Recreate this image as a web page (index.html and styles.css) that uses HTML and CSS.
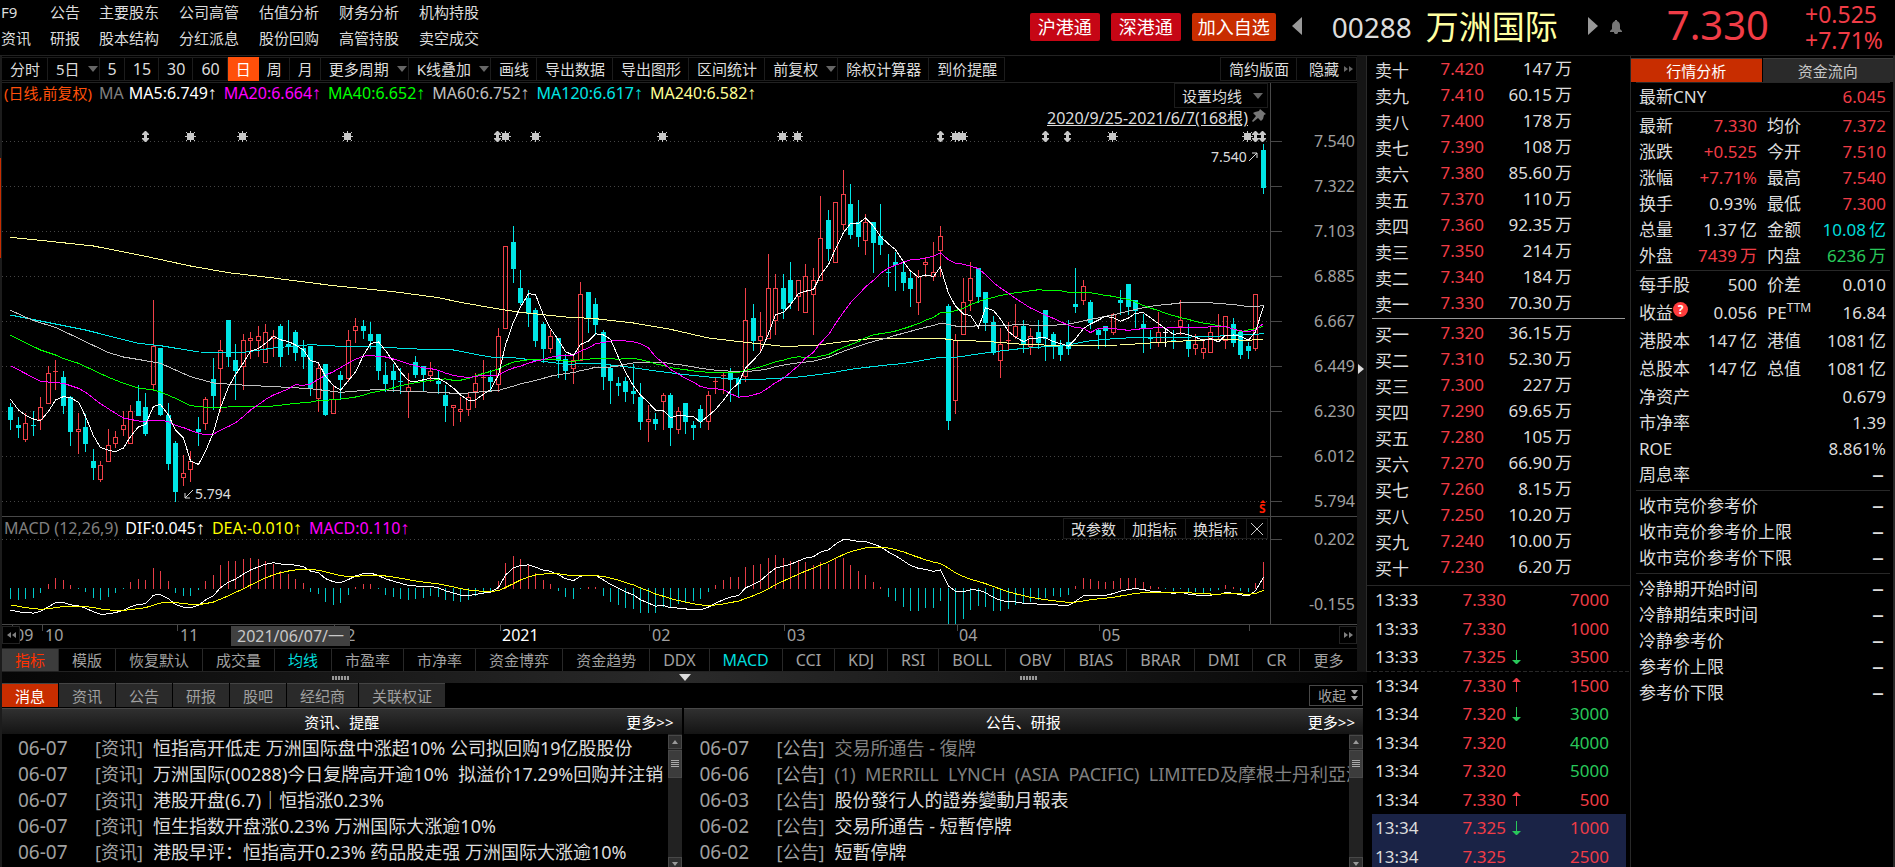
FILE: index.html
```html
<!DOCTYPE html>
<html lang="zh-CN">
<head>
    <meta charset="UTF-8">
    <meta name="viewport" content="width=device-width, initial-scale=1.0">
    <title>00288 万洲国际</title>
    <link rel="stylesheet" href="styles.css">
</head>
<body>
    <svg class="defs" aria-hidden="true">
        <symbol id="tri" viewBox="0 0 10 6"><path d="M0 0h10l-5 6z"/></symbol>
        <symbol id="up" viewBox="0 0 9 14"><path d="M4 14V4H0l4-4h1l4 4H5v10z"/></symbol>
        <symbol id="down" viewBox="0 0 9 14"><path d="M4 0v10H0l4 4h1l4-4H5V0z"/></symbol>
        <symbol id="fwd" viewBox="0 0 9 6"><path d="M0 0l4 3-4 3zM5 0l4 3-4 3z"/></symbol>
        <symbol id="back" viewBox="0 0 9 6"><path d="M4 0L0 3l4 3zM9 0L5 3l4 3z"/></symbol>
    </svg>

    <header class="top">
        <nav class="menu">
            <a href="#">F9</a><a href="#">公告</a><a href="#">主要股东</a><a href="#">公司高管</a><a href="#">估值分析</a><a href="#">财务分析</a><a href="#">机构持股</a>
            <a href="#">资讯</a><a href="#">研报</a><a href="#">股本结构</a><a href="#">分红派息</a><a href="#">股份回购</a><a href="#">高管持股</a><a href="#">卖空成交</a>
        </nav>
        <div class="badges">
            <button>沪港通</button>
            <button>深港通</button>
            <button class="add">加入自选</button>
        </div>
        <button class="step" aria-label="上一只"><svg width="10" height="18" viewBox="0 0 10 18"><path d="M10 0v18L0 9z"/></svg></button>
        <h1><span class="code">00288</span><span class="name">万洲国际</span></h1>
        <button class="step" aria-label="下一只"><svg width="10" height="18" viewBox="0 0 10 18"><path d="M0 0v18l10-9z"/></svg></button>
        <button class="bell" aria-label="提醒"><svg width="12" height="14" viewBox="0 0 12 14"><path d="M5 0h2v1c2 1 3 2 3 5v3l2 2v1H0v-1l2-2V6c0-3 1-4 3-5zM4 12h4v1l-1 1H5l-1-1z"/></svg></button>
        <div class="price">7.330</div>
        <div class="change"><span>+0.525</span><span>+7.71%</span></div>
    </header>

    <main class="desk">
        <section class="left">
            <div class="upper">
                <div class="chart-col">
                    <div class="toolbar">
                        <button>分时</button>
                        <button class="drop">5日<svg width="10" height="6"><use href="#tri"/></svg></button>
                        <button class="num">5</button>
                        <button class="num">15</button>
                        <button class="num">30</button>
                        <button class="num">60</button>
                        <button class="on">日</button>
                        <button>周</button>
                        <button>月</button>
                        <button class="drop">更多周期<svg width="10" height="6"><use href="#tri"/></svg></button>
                        <button class="drop">K线叠加<svg width="10" height="6"><use href="#tri"/></svg></button>
                        <button>画线</button>
                        <button>导出数据</button>
                        <button>导出图形</button>
                        <button>区间统计</button>
                        <button class="drop">前复权<svg width="10" height="6"><use href="#tri"/></svg></button>
                        <button>除权计算器</button>
                        <button>到价提醒</button>
                        <button class="simple">简约版面</button>
                        <button class="hide">隐藏<svg width="9" height="6"><use href="#fwd"/></svg></button>
                    </div>

                    <div class="panel">
                        <div class="plot">
                            <svg id="kline" viewBox="2 83 1268 433"></svg>
                            <div class="legend">
                                <span class="orange">(日线,前复权)</span>
                                <span class="dim">MA</span>
                                <span class="w">MA5:6.749<i>↑</i></span>
                                <span class="m">MA20:6.664<i>↑</i></span>
                                <span class="g">MA40:6.652<i>↑</i></span>
                                <span class="s">MA60:6.752<i>↑</i></span>
                                <span class="c">MA120:6.617<i>↑</i></span>
                                <span class="y">MA240:6.582<i>↑</i></span>
                            </div>
                            <button class="set-ma">设置均线<svg width="10" height="6"><use href="#tri"/></svg></button>
                            <div class="range">
                                <a href="#">2020/9/25-2021/6/7(168根)</a>
                                <svg width="14" height="14" viewBox="0 0 14 14"><path d="M8 0l6 5-2 1-1 4-2 2-3-3-5 4-1-1 4-5-3-3 2-1 4-1z"/></svg>
                            </div>
                        </div>
                        <div class="axis"><span>7.540</span><span>7.322</span><span>7.103</span><span>6.885</span><span>6.667</span><span>6.449</span><span>6.230</span><span>6.012</span><span>5.794</span></div>
                    </div>

                    <div class="panel">
                        <div class="plot">
                            <svg id="macd" viewBox="2 517 1268 107"></svg>
                            <div class="legend low">
                                <span class="dim">MACD (12,26,9)</span>
                                <span class="w">DIF:0.045<i>↑</i></span>
                                <span class="dea">DEA:-0.010<i>↑</i></span>
                                <span class="m">MACD:0.110<i>↑</i></span>
                            </div>
                            <div class="macd-tools">
                                <button>改参数</button><button>加指标</button><button>换指标</button><button class="close" aria-label="关闭"><svg width="12" height="12" viewBox="0 0 12 12"><path d="M0 0l12 12M12 0L0 12"/></svg></button>
                            </div>
                        </div>
                        <div class="axis macd-axis"><span>0.202</span><span>-0.155</span></div>
                    </div>

                    <div class="time">
                        <svg id="dates" viewBox="2 625 1355 23"></svg>
                        <button class="prev" aria-label="向前"><svg width="9" height="6"><use href="#back"/></svg></button>
                        <span class="cursor-date">2021/06/07/一</span>
                        <button class="next" aria-label="向后"><svg width="9" height="6"><use href="#fwd"/></svg></button>
                    </div>

                    <div class="indicators">
                        <button class="on">指标</button><button>模版</button><button>恢复默认</button><button>成交量</button><button class="pick">均线</button><button>市盈率</button><button>市净率</button><button>资金博弈</button><button>资金趋势</button><button class="en">DDX</button><button class="en pick">MACD</button><button class="en">CCI</button><button class="en">KDJ</button><button class="en">RSI</button><button class="en">BOLL</button><button class="en">OBV</button><button class="en">BIAS</button><button class="en">BRAR</button><button class="en">DMI</button><button class="en">CR</button><button>更多</button>
                    </div>
                </div>
                <div class="strip"><svg width="6" height="10" viewBox="0 0 6 10"><path d="M0 0l6 5-6 5z"/></svg></div>
            </div>

            <div class="splitter">
                <i class="grip"></i>
                <svg width="12" height="7" viewBox="0 0 12 7"><path d="M0 0h12L6 7z"/></svg>
                <i class="grip"></i>
            </div>

            <div class="news-tabs">
                <button class="on">消息</button><button>资讯</button><button>公告</button><button>研报</button><button>股吧</button><button>经纪商</button><button>关联权证</button>
                <button class="fold">收起<svg width="7" height="11" viewBox="0 0 7 11"><path d="M0 0h7L4 4H3zM0 6h7l-3 4H3z"/></svg></button>
            </div>

            <div class="news">
                <section>
                    <h2>资讯、提醒<a href="#">更多&gt;&gt;</a></h2>
                    <div class="feed">
                        <ul>
                            <li><time>06-07</time><em>[资讯]</em><a href="#">恒指高开低走 万洲国际盘中涨超10% 公司拟回购19亿股股份</a></li>
                            <li><time>06-07</time><em>[资讯]</em><a href="#">万洲国际(00288)今日复牌高开逾10%  拟溢价17.29%回购并注销</a></li>
                            <li><time>06-07</time><em>[资讯]</em><a href="#">港股开盘(6.7)｜恒指涨0.23%</a></li>
                            <li><time>06-07</time><em>[资讯]</em><a href="#">恒生指数开盘涨0.23% 万洲国际大涨逾10%</a></li>
                            <li><time>06-07</time><em>[资讯]</em><a href="#">港股早评：恒指高开0.23% 药品股走强 万洲国际大涨逾10%</a></li>
                        </ul>
                        <div class="scroll"><b class="btn-up"></b><b class="thumb"></b><b class="btn-down"></b></div>
                    </div>
                </section>
                <section>
                    <h2>公告、研报<a href="#">更多&gt;&gt;</a></h2>
                    <div class="feed">
                        <ul>
                            <li><time>06-07</time><em>[公告]</em><a href="#" class="read">交易所通告 - 復牌</a></li>
                            <li><time>06-06</time><em>[公告]</em><a href="#" class="read">(1)  MERRILL  LYNCH  (ASIA  PACIFIC)  LIMITED及摩根士丹利亞洲</a></li>
                            <li><time>06-03</time><em>[公告]</em><a href="#">股份發行人的證券變動月報表</a></li>
                            <li><time>06-02</time><em>[公告]</em><a href="#">交易所通告 - 短暫停牌</a></li>
                            <li><time>06-02</time><em>[公告]</em><a href="#">短暫停牌</a></li>
                        </ul>
                        <div class="scroll"><b class="btn-up"></b><b class="thumb"></b><b class="btn-down"></b></div>
                    </div>
                </section>
            </div>
        </section>

        <!-- 买卖盘口 -->
        <section class="book">
            <table class="depth">
                <tbody>
                    <tr><th>卖十</th><td>7.420</td><td>147<i>万</i></td></tr>
                    <tr><th>卖九</th><td>7.410</td><td>60.15<i>万</i></td></tr>
                    <tr><th>卖八</th><td>7.400</td><td>178<i>万</i></td></tr>
                    <tr><th>卖七</th><td>7.390</td><td>108<i>万</i></td></tr>
                    <tr><th>卖六</th><td>7.380</td><td>85.60<i>万</i></td></tr>
                    <tr><th>卖五</th><td>7.370</td><td>110<i>万</i></td></tr>
                    <tr><th>卖四</th><td>7.360</td><td>92.35<i>万</i></td></tr>
                    <tr><th>卖三</th><td>7.350</td><td>214<i>万</i></td></tr>
                    <tr><th>卖二</th><td>7.340</td><td>184<i>万</i></td></tr>
                    <tr><th>卖一</th><td>7.330</td><td>70.30<i>万</i></td></tr>
                </tbody>
            </table>
            <hr>
            <table class="depth">
                <tbody>
                    <tr><th>买一</th><td>7.320</td><td>36.15<i>万</i></td></tr>
                    <tr><th>买二</th><td>7.310</td><td>52.30<i>万</i></td></tr>
                    <tr><th>买三</th><td>7.300</td><td>227<i>万</i></td></tr>
                    <tr><th>买四</th><td>7.290</td><td>69.65<i>万</i></td></tr>
                    <tr><th>买五</th><td>7.280</td><td>105<i>万</i></td></tr>
                    <tr><th>买六</th><td>7.270</td><td>66.90<i>万</i></td></tr>
                    <tr><th>买七</th><td>7.260</td><td>8.15<i>万</i></td></tr>
                    <tr><th>买八</th><td>7.250</td><td>10.20<i>万</i></td></tr>
                    <tr><th>买九</th><td>7.240</td><td>10.00<i>万</i></td></tr>
                    <tr><th>买十</th><td>7.230</td><td>6.20<i>万</i></td></tr>
                </tbody>
            </table>
            <table class="ticks">
                <tbody>
                    <tr><td>13:33</td><td>7.330</td><td></td><td>7000</td></tr>
                    <tr><td>13:33</td><td>7.330</td><td></td><td>1000</td></tr>
                    <tr><td>13:33</td><td>7.325</td><td><svg class="dn" width="9" height="14"><use href="#down"/></svg></td><td>3500</td></tr>
                    <tr class="minute"><td>13:34</td><td>7.330</td><td><svg width="9" height="14"><use href="#up"/></svg></td><td>1500</td></tr>
                    <tr><td>13:34</td><td>7.320</td><td><svg class="dn" width="9" height="14"><use href="#down"/></svg></td><td class="sell">3000</td></tr>
                    <tr><td>13:34</td><td>7.320</td><td></td><td class="sell">4000</td></tr>
                    <tr><td>13:34</td><td>7.320</td><td></td><td class="sell">5000</td></tr>
                    <tr><td>13:34</td><td>7.330</td><td><svg width="9" height="14"><use href="#up"/></svg></td><td>500</td></tr>
                    <tr class="hot"><td>13:34</td><td>7.325</td><td><svg class="dn" width="9" height="14"><use href="#down"/></svg></td><td>1000</td></tr>
                    <tr class="hot"><td>13:34</td><td>7.325</td><td></td><td>2500</td></tr>
                </tbody>
            </table>
        </section>

        <!-- 行情分析 -->
        <section class="quote">
            <div class="quote-tabs"><button class="on">行情分析</button><button>资金流向</button></div>
            <table class="tall one">
                <tbody><tr><th>最新CNY</th><td class="red">6.045</td></tr></tbody>
            </table>
            <table class="two">
                <tbody>
                    <tr><th>最新</th><td class="red">7.330</td><th>均价</th><td class="red">7.372</td></tr>
                    <tr><th>涨跌</th><td class="red">+0.525</td><th>今开</th><td class="red">7.510</td></tr>
                    <tr><th>涨幅</th><td class="red">+7.71%</td><th>最高</th><td class="red">7.540</td></tr>
                    <tr><th>换手</th><td>0.93%</td><th>最低</th><td class="red">7.300</td></tr>
                    <tr><th>总量</th><td>1.37<i>亿</i></td><th>金额</th><td class="cyan">10.08<i>亿</i></td></tr>
                    <tr><th>外盘</th><td class="red">7439<i>万</i></td><th>内盘</th><td class="green">6236<i>万</i></td></tr>
                </tbody>
            </table>
            <table class="tall two shares">
                <tbody>
                    <tr><th>每手股</th><td>500</td><th>价差</th><td>0.010</td></tr>
                    <tr><th>收益<b class="help">?</b></th><td>0.056</td><th>PE<sup>TTM</sup></th><td>16.84</td></tr>
                    <tr><th>港股本</th><td>147<i>亿</i></td><th>港值</th><td>1081<i>亿</i></td></tr>
                    <tr><th>总股本</th><td>147<i>亿</i></td><th>总值</th><td>1081<i>亿</i></td></tr>
                </tbody>
            </table>
            <table class="one ratios">
                <tbody>
                    <tr><th>净资产</th><td>0.679</td></tr>
                    <tr><th>市净率</th><td>1.39</td></tr>
                    <tr><th>ROE</th><td>8.861%</td></tr>
                    <tr><th>周息率</th><td class="none">–</td></tr>
                </tbody>
            </table>
            <table class="one">
                <tbody>
                    <tr><th>收市竞价参考价</th><td class="none">–</td></tr>
                    <tr><th>收市竞价参考价上限</th><td class="none">–</td></tr>
                    <tr><th>收市竞价参考价下限</th><td class="none">–</td></tr>
                </tbody>
            </table>
            <table class="one">
                <tbody>
                    <tr><th>冷静期开始时间</th><td class="none">–</td></tr>
                    <tr><th>冷静期结束时间</th><td class="none">–</td></tr>
                    <tr><th>冷静参考价</th><td class="none">–</td></tr>
                    <tr><th>参考价上限</th><td class="none">–</td></tr>
                    <tr><th>参考价下限</th><td class="none">–</td></tr>
                </tbody>
            </table>
        </section>
    </main>

    <script src="chart.js"></script>
</body>
</html>
```
FILE: styles.css
```css
* {
    box-sizing: border-box;
}

body {
    margin: 0;
    height: 100vh;
    overflow: hidden;
    background: #000;
    color: #dcdcdc;
    font-family: "Noto Sans", "Noto Sans CJK SC", sans-serif;
    font-size: 15px;
}

button {
    font: inherit;
    color: inherit;
    background: none;
    border: 0;
    padding: 0;
    margin: 0;
    white-space: nowrap;
    cursor: pointer;
}

a {
    color: inherit;
    text-decoration: none;
}

svg {
    fill: currentColor;
}

table {
    border-collapse: collapse;
    table-layout: fixed;
}

th,
td {
    padding: 0;
    font-weight: normal;
    white-space: nowrap;
}

th {
    text-align: left;
}

td i {
    margin-left: 3px;
    font-style: normal;
}

.defs {
    display: none;
}

/* 顶部 */
.top {
    display: flex;
    align-items: center;
    height: 56px;
    border-bottom: 1px solid #222;
}

.menu {
    display: grid;
    grid-template-columns: 49px 49px 80px 80px 80px 80px 80px;
    align-self: flex-start;
    margin: -1px auto 0 1px;
    line-height: 26px;
    white-space: nowrap;
}

.badges {
    display: flex;
    gap: 11px;
    margin-bottom: 2px;
}

.badges button {
    height: 28px;
    padding: 0 8px;
    border-radius: 2px;
    background: #c60615;
    color: #fff;
    font-size: 18px;
    line-height: 26px;
}

.badges .add {
    padding: 0 6px;
    background: #c82d00;
}

.step {
    display: flex;
    margin: 0 0 4px 16px;
    color: #999;
}

.top h1 {
    display: flex;
    align-items: center;
    gap: 14px;
    margin: 0 14px 2px 30px;
    font-weight: normal;
    line-height: 48px;
}

.code {
    font-size: 28px;
}

.name {
    color: #ffffa0;
    font-size: 33px;
}

.bell {
    display: flex;
    margin: 0 0 2px 12px;
    color: #777;
}

.price {
    margin: 0 36px 6px 45px;
    color: #f03c46;
    font-size: 40px;
    line-height: 50px;
}

.change {
    display: flex;
    flex-direction: column;
    width: 90px;
    margin-bottom: 2px;
    color: #f03c46;
    font-size: 23px;
    line-height: 26px;
}

/* 主体 */
.desk {
    display: grid;
    grid-template-columns: minmax(0, 1fr) 264px 264px;
    height: calc(100vh - 56px);
}

.left {
    display: flex;
    flex-direction: column;
    min-width: 0;
    border-left: 2px solid #1c1c1c;
    position: relative;
}

.left::before {
    content: "";
    position: absolute;
    left: -2px;
    top: 102px;
    width: 1px;
    height: 100px;
    background: #c82d00;
}

.upper {
    display: flex;
}

.chart-col {
    flex: 1;
    min-width: 0;
}

.toolbar {
    display: flex;
    height: 27px;
    padding: 1px 0;
    border-bottom: 1px solid #222;
}

.toolbar button {
    padding: 0 7px 0 8px;
    border: 1px solid #1c1c1c;
    border-left: 0;
    line-height: 20px;
}

.toolbar .num {
    font-size: 16px;
}

.toolbar .drop {
    display: flex;
    align-items: center;
    gap: 8px;
    padding-right: 1px;
    padding-bottom: 1px;
}

.drop svg,
.set-ma svg {
    color: #666;
}

.toolbar .on {
    border-color: #ff500a;
    background: #ff500a;
    color: #fff;
}

.toolbar .simple {
    margin-left: auto;
    border-left: 1px solid #1c1c1c;
}

.toolbar .hide {
    display: flex;
    align-items: center;
    gap: 5px;
    padding: 0 3px 0 12px;
}

.hide svg {
    color: #666;
}

.panel {
    display: flex;
    align-items: flex-start;
    border-bottom: 1px solid #484848;
}

.plot {
    position: relative;
    flex: 1;
    min-width: 0;
    border-right: 1px solid #484848;
}

.plot > svg,
.time > svg {
    display: block;
    width: 100%;
    font-size: 14px;
}

.axis {
    width: 86px;
    padding-top: 36px;
    margin-bottom: -10px;
    color: #a0a0a0;
    font-size: 16px;
    line-height: 45px;
}

.axis span {
    display: flex;
    align-items: center;
    justify-content: space-between;
    padding-right: 2px;
}

.axis span::before {
    content: "";
    width: 11px;
    height: 1px;
    background: #484848;
}

.macd-axis {
    padding-top: 0;
}

.macd-axis span {
    margin-bottom: 20px;
}

.macd-axis span:last-child {
    margin: 0;
}

.macd-axis span:last-child::before {
    background: none;
}

.legend {
    position: absolute;
    left: 2px;
    top: 0;
    display: flex;
    gap: 7px;
    font-size: 16px;
    line-height: 20px;
    white-space: nowrap;
}

.legend.low {
    line-height: 22px;
}

.legend i {
    font-family: "Liberation Sans", sans-serif;
    font-size: 18px;
    font-style: normal;
    line-height: 1;
}

.orange { color: #ff500a; font-size: 15px; }
.dim { color: #808080; }
.w { color: #fff; }
.m { color: #ff00ff; }
.g { color: #00ff00; }
.s { color: #c0c0c0; }
.c { color: #00e6e6; }
.y { color: #ffff96; }
.dea { color: #ffff00; }

.legend .dim {
    margin-right: -2px;
}

.low .dim {
    margin-right: 0;
}

.set-ma {
    position: absolute;
    right: 2px;
    top: 0;
    display: flex;
    align-items: center;
    gap: 11px;
    height: 25px;
    padding: 0 4px 0 7px;
    border: 1px solid #1c1c1c;
}

.range {
    position: absolute;
    right: 4px;
    top: 26px;
    display: flex;
    gap: 4px;
    font-size: 16px;
    line-height: 18px;
}

.range a {
    text-decoration: underline;
}

.range svg {
    color: #777;
}

.macd-tools {
    position: absolute;
    right: 2px;
    top: 1px;
    display: flex;
    height: 21px;
    border: 1px solid #1c1c1c;
}

.macd-tools button {
    padding: 0 8px 0 7px;
    border-right: 1px solid #1c1c1c;
    line-height: 18px;
}

.macd-tools .close {
    padding: 0 4px;
    border: 0;
}

.close svg {
    display: block;
    stroke: #ccc;
}

.time {
    position: relative;
    color: #a0a0a0;
}

.time > svg {
    font-size: 16px;
}

.time button {
    position: absolute;
    top: 1px;
    display: flex;
    align-items: center;
    justify-content: center;
    width: 18px;
    height: 18px;
    border: 1px solid #222;
    background: #000;
    color: #808080;
}

.time .prev { left: 0; }
.time .next { right: 0; }

.cursor-date {
    position: absolute;
    left: 229px;
    top: 1px;
    padding: 0 6px;
    background: #404040;
    color: #c8c8c8;
    font-size: 16px;
    line-height: 20px;
}

.indicators {
    display: flex;
    height: 24px;
    border-top: 1px solid #222;
    border-bottom: 1px solid #222;
    color: #a0a0a0;
}

.indicators button {
    padding: 0 13px;
    border-right: 1px solid #282828;
    line-height: 22px;
}

.indicators .on {
    background: #3c3c3c;
    color: #ff3200;
}

.indicators .pick { color: #00dcdc; }
.indicators .en { font-size: 16px; }

.strip {
    display: flex;
    align-items: center;
    width: 10px;
    padding: 9px 0 0 1px;
    border-right: 1px solid #2a2a2a;
    background: #151515;
}

.splitter {
    display: flex;
    align-items: center;
    justify-content: space-evenly;
    height: 11px;
    background: linear-gradient(90deg, #060606, #2a2a2a 50%, #060606);
}

.grip {
    width: 17px;
    height: 4px;
    background: repeating-linear-gradient(90deg, #999 0 2px, #222 2px 3px);
}

.news-tabs {
    display: flex;
    gap: 1px;
    height: 25px;
    padding-right: 4px;
    color: #a0a0a0;
}

.news-tabs button {
    height: 24px;
    padding: 0 13px;
    background: #2a2a2a;
    border-top: 1px solid #444;
    line-height: 22px;
}

.news-tabs .on {
    background: #c82d00;
    color: #fff;
}

.news-tabs .fold {
    display: flex;
    align-items: center;
    gap: 5px;
    height: 21px;
    margin: 2px 0 0 auto;
    padding: 0 4px 0 8px;
    border: 1px solid #484848;
    background: #000;
    line-height: 18px;
    font-size: 14px;
}

.news {
    display: grid;
    grid-template-columns: minmax(0, 1fr) minmax(0, 1fr);
    gap: 2px;
    flex: 1;
    min-height: 0;
    padding-right: 4px;
}

.news section {
    display: flex;
    flex-direction: column;
    min-height: 0;
}

.news h2 {
    position: relative;
    flex: none;
    margin: 0;
    height: 26px;
    border-top: 1px solid #484848;
    background: linear-gradient(#303030, #141414);
    color: #fff;
    font-size: 15px;
    font-weight: normal;
    line-height: 26px;
    text-align: center;
}

.news h2 a {
    position: absolute;
    right: 8px;
    top: 0;
}

.feed {
    display: flex;
    flex: 1;
    min-height: 0;
}

.feed ul {
    flex: 1;
    min-width: 0;
    margin: 0;
    padding: 1px 0 0 16px;
    overflow: hidden;
    list-style: none;
    font-size: 18px;
    line-height: 26px;
}

.feed li {
    display: flex;
    height: 26px;
    white-space: pre;
}

.feed time {
    flex: none;
    width: 77px;
    color: #a0a0a0;
    font-size: 19px;
}

.feed em {
    flex: none;
    width: 58px;
    color: #a0a0a0;
    font-style: normal;
}

.feed .read {
    color: #808080;
}

.scroll {
    display: flex;
    flex-direction: column;
    gap: 1px;
    width: 14px;
    padding-top: 1px;
    background: #222;
}

.scroll b {
    display: flex;
    align-items: center;
    justify-content: center;
    height: 14px;
    border: 1px solid #484848;
    background: #303030;
}

.scroll .thumb {
    height: 28px;
    margin-bottom: auto;
    background: #3c3c3c;
}

.thumb::after {
    content: "";
    width: 8px;
    height: 8px;
    background: repeating-linear-gradient(#aaa 0 1px, #3c3c3c 1px 2px);
}

.btn-up::after,
.btn-down::after {
    content: "";
    border: 3px solid transparent;
    border-top: 0;
    border-bottom: 4px solid #999;
}

.btn-down::after {
    border-bottom: 0;
    border-top: 4px solid #999;
}

/* 盘口 */
.book,
.quote {
    font-size: 17px;
    border-right: 1px solid #282828;
}

.depth {
    width: 197px;
    margin-left: 8px;
}

.depth tr {
    height: 26px;
}

.depth td {
    width: 88px;
    text-align: right;
    line-height: 24px;
}

.depth td:nth-child(2) {
    color: #f03c46;
}

.book hr {
    height: 1px;
    margin: 2px 5px 1px;
    border: 0;
    background: #999;
}

.ticks {
    width: 100%;
    border-top: 1px solid #282828;
    margin-top: 5px;
    color: #f03c46;
}

.ticks tr {
    height: 28px;
}

.ticks tr:nth-child(even) {
    height: 29px;
}

.ticks td:nth-child(1) {
    width: 58px;
    padding-left: 8px;
    color: #dcdcdc;
}

.ticks td:nth-child(2) {
    width: 81px;
    text-align: right;
}

.ticks td:nth-child(3) {
    padding-left: 6px;
}

.ticks svg {
    display: block;
}

.ticks td:nth-child(4) {
    width: 80px;
    padding-right: 21px;
    text-align: right;
}

.ticks .dn,
.ticks .sell,
.green {
    color: #28c85a;
}

.ticks .minute {
    background: repeating-linear-gradient(90deg, #282828 0 4px, transparent 4px 6px) 0 0 / 100% 1px no-repeat;
}

.ticks .hot {
    background: linear-gradient(#1a2346, #1a2346) 5px 0 / 254px 100% no-repeat;
}

.red { color: #f03c46; }
.cyan { color: #00dcdc; }

/* 行情 */
.quote {
    border-right: 2px solid #282828;
}

.quote-tabs {
    display: flex;
    gap: 1px;
    padding-top: 2px;
    font-size: 15px;
}

.quote-tabs button {
    flex: 1;
    height: 24px;
    background: #2a2a2a;
    border-top: 1px solid #3c3c3c;
    color: #c8c8c8;
    line-height: 22px;
}

.quote-tabs .on {
    background: #c82d00;
    color: #fff;
}

.quote table {
    width: 254px;
    margin-left: 5px;
    border-top: 1px solid #282828;
    border-collapse: separate;
    border-spacing: 0;
    padding: 2px 4px 2px 3px;
}

.quote tr {
    height: 26px;
}

.quote th,
.quote td {
    line-height: 24px;
}

.quote td {
    text-align: right;
}

.quote .two th,
.quote .two td {
    padding-bottom: 2px;
}

.quote .tall tr { height: 28px; }
.quote .tall { padding-top: 0; padding-bottom: 0; }
.quote .two { padding-bottom: 0; }
.quote .shares { padding-top: 1px; }
.quote .ratios { border-top: 0; padding-top: 0; }
.two th:first-child { width: 54px; }
.two td { width: 64px; }
.two th:nth-child(3) { padding-left: 10px; }
.one th { width: 165px; }

.quote .none {
    padding-right: 2px;
    font-size: 24px;
    line-height: 20px;
    padding-bottom: 4px;
}

.help {
    display: inline-block;
    width: 15px;
    height: 15px;
    border-radius: 8px;
    background: #ff3c3c;
    color: #fff;
    font-size: 12px;
    line-height: 15px;
    text-align: center;
    vertical-align: 5px;
}

.quote sup {
    font-size: 12px;
    line-height: 1px;
}
```
FILE: chart.js
```js
// 每根K线: 颜色 最高 实体上沿 实体下沿 最低 (1/3像素, r涨 c跌 w平)
const raw = `c 850 861 900 930,c 892 915 924 954,r 880 909 960 966,c 873 915 918 948,r 831 861 900 930,r 738 759 852 852,r 720 753 756 810,c 753 771 858 882,
c 828 831 936 978,r 879 927 936 1002,c 883 921 972 996,c 987 1023 1044 1080,r 1023 1035 1080 1086,r 927 975 1026 1026,r 933 951 972 984,r 873 915 930 948,
r 855 873 972 972,c 795 843 888 888,c 819 861 942 948,r 540 678 795 810,c 684 684 885 888,c 849 885 1032 1050,c 963 969 1116 1146,r 1005 1059 1074 1098,
r 993 1023 1050 1086,c 891 927 936 978,r 831 837 912 930,c 714 777 828 870,r 660 690 747 876,c 600 600 711 741,c 672 720 753 840,r 642 660 741 810,
r 636 654 663 717,r 618 648 663 711,r 612 636 729 729,r 630 648 657 711,c 612 618 711 741,c 600 672 681 705,c 630 636 699 723,c 660 684 711 747,
c 678 678 807 828,r 726 744 837 876,c 732 732 885 888,r 798 837 882 882,c 753 765 780 840,r 630 660 777 786,r 594 618 633 669,c 600 618 633 657,
c 606 642 663 687,c 642 642 753 780,c 726 765 792 816,c 732 753 780 816,c 744 783 786 822,r 759 801 816 894,c 708 726 765 774,c 738 738 765 816,
r 726 753 768 786,c 753 783 792 822,c 795 825 858 906,r 855 855 864 918,r 831 867 876 906,r 816 831 870 888,r 759 789 816 864,r 720 771 774 840,
c 750 771 786 813,r 624 648 795 816,r 378 378 627 627,c 318 366 447 489,c 450 504 549 555,c 510 534 582 621,c 564 570 663 681,c 606 612 687 729,
r 630 648 687 699,c 654 654 723 774,c 702 717 753 780,r 702 720 747 792,r 486 522 723 723,c 516 516 597 639,c 534 552 615 645,c 630 636 771 810,
c 738 744 783 852,c 771 789 798 828,c 771 783 816 846,c 732 813 822 852,c 789 831 906 930,r 855 897 906 966,c 879 897 912 930,r 819 825 846 930,
c 819 825 924 978,r 861 873 930 942,c 849 849 906 942,c 903 915 924 960,c 855 867 906 924,r 813 825 906 930,r 774 783 786 822,r 759 765 768 822,
c 744 753 780 846,c 771 777 792 834,r 504 600 771 786,c 552 594 663 693,r 576 648 663 693,r 402 504 657 657,r 462 504 603 645,c 462 504 567 597,
c 426 480 549 567,r 480 480 531 573,r 432 468 579 579,r 444 480 525 645,r 228 354 483 483,c 270 300 387 423,r 246 246 429 429,r 150 222 315 330,
c 192 252 345 357,c 240 306 351 381,r 282 306 363 405,c 306 306 369 459,c 252 348 375 405,c 402 456 459 501,c 396 426 435 513,c 426 456 489 513,
c 456 474 507 561,r 450 468 549 585,r 411 426 435 471,r 366 456 471 483,r 318 348 393 471,c 552 558 903 930,r 642 660 843 882,r 474 546 645 645,
r 426 474 543 573,c 444 444 531 549,c 516 516 609 633,c 588 606 699 705,r 624 672 723 774,r 606 660 663 693,r 552 618 651 657,c 600 618 675 699,
r 624 648 681 705,c 600 636 669 687,c 570 570 657 723,c 636 642 675 717,c 660 675 705 723,c 600 666 687 705,c 444 552 561 579,r 480 498 543 555,
c 540 546 609 627,c 624 630 645 687,c 618 618 633 681,r 579 582 639 645,c 510 540 549 585,c 492 492 561 585,c 540 540 573 624,c 582 612 627 699,
c 630 654 657 687,r 576 636 669 681,w 624 636 639 681,c 630 660 663 687,r 540 600 621 645,c 612 663 687 711,r 642 672 687 705,r 660 684 699 717,
r 618 636 699 699,r 582 648 651 657,r 588 588 663 687,c 594 612 669 681,c 636 636 705 717,c 666 678 693 717,r 522 522 687 693,c 72 90 204 222`;

const colors = { r: '#f04048', c: '#00e6e6', w: '#ffffff' };
const bars = raw.split(',').map(s => {
    const [k, h, t, b, l] = s.trim().split(' ');
    return { k, h: +h, t: +t, b: +b, l: +l, close: k === 'c' ? +b : +t };
});
const barX = i => Math.round(10 + 7.5 * i);
const py = v => Math.round(120 + v / 3);

function rect(x, y, w, h, fill) {
    return `<rect x="${x}" y="${y}" width="${w}" height="${h}" fill="${fill}"/>`;
}

function line(points, color) {
    return `<polyline points="${points.join(' ')}" fill="none" stroke="${color}" shape-rendering="crispEdges"/>`;
}

function dotted(y) {
    return `<path d="M2 ${y}.5H1270" stroke="#444" stroke-dasharray="1 3"/>`;
}

// 均线: head 为窗口之前没有数据的部分 [序号, y]
function ma(n, head, color) {
    const pts = head.map(([i, v]) => `${barX(i) + 0.5},${120 + v / 3}`);
    for (let i = n - 1; i < bars.length; i++) {
        let sum = 0;
        for (let j = i - n + 1; j <= i; j++) sum += bars[j].close;
        pts.push(`${barX(i) + 0.5},${120 + sum / n / 3}`);
    }
    return line(pts, color);
}

let out = '';
for (let k = 0; k < 9; k++) out += dotted(141 + 45 * k);

bars.forEach((d, i) => {
    const x = barX(i), c = colors[d.k];
    const h = py(d.h), t = py(d.t), b = py(d.b), l = py(d.l);
    if (d.k === 'c' || b - t < 2) {
        out += rect(x, h, 1, l - h, c) + rect(x - 2, t, 5, b - t, c);
    } else {
        out += rect(x, h, 1, t - h, c) + rect(x, b, 1, l - b, c);
        out += `<rect x="${x - 1.5}" y="${t + 0.5}" width="4" height="${b - t - 1}" fill="none" stroke="${c}"/>`;
    }
});

out += ma(240, [[0, 352], [4, 361], [11, 378], [18, 409], [24, 438], [29, 458], [35, 474], [43, 497], [51, 515], [57, 533], [60, 547], [65, 567], [68, 577], [74, 591], [78, 596], [83, 609], [88, 628], [93, 654], [98, 667], [103, 679], [107, 677], [111, 665], [115, 655], [124, 655], [126, 661], [130, 664], [135, 673], [139, 676], [148, 675], [152, 669], [157, 662], [161, 658], [165, 661], [167, 657]], '#ffff96');
out += ma(120, [[0, 585], [4, 603], [10, 630], [17, 670], [20, 677], [25, 696], [31, 697], [35, 684], [40, 674], [44, 679], [48, 680], [55, 688], [59, 690], [62, 703], [64, 711], [67, 713], [71, 724], [74, 733], [78, 730], [82, 740], [86, 753], [90, 764], [94, 773], [97, 777], [100, 778], [105, 771], [109, 760], [112, 748], [116, 737]], '#00e6e6');
out += ma(60, [[0, 571], [3, 602], [6, 622], [9, 655], [13, 698], [15, 711], [18, 722], [20, 730], [24, 770], [27, 789], [30, 794], [36, 801], [40, 806], [44, 817], [49, 808], [53, 815], [58, 817]], '#c0c0c0');
out += ma(40, [[0, 646], [4, 690], [6, 705], [7, 716], [9, 730], [13, 772], [15, 790], [17, 804], [19, 810], [20, 816], [22, 835], [24, 857], [26, 862], [29, 861], [31, 860], [35, 858], [38, 850]], '#00ff00');
out += ma(20, [[0, 737], [4, 784], [7, 790], [9, 805], [10, 817], [12, 851], [14, 880], [15, 894], [17, 903], [18, 904]], '#ff00ff');
out += ma(5, [[0, 838], [1, 870], [2, 886], [3, 897]], '#ffffff');

// 顶部事件标记
[190, 242, 347, 505, 535, 662, 782, 797, 955, 962, 1112, 1247].forEach(x => {
    out += `<path transform="translate(${x} 136)" fill="#c8c8c8" d="M-3-3H0V-5H1V-3H4V0H6V1H4V4H1V6H0V4H-3V1H-5V0H-3zM-4-4h1v1h-1zM4-4h1v1h-1zM-4 4h1v1h-1zM4 4h1v1h-1z"/>`;
});
[145, 497, 940, 1045, 1067, 1255, 1262].forEach(x => {
    out += `<path transform="translate(${x} 136)" fill="#c8c8c8" d="M0-5h1l3 3v1H2v3h2v1L1 6H0l-3-3V2h2v-3h-2v-1z"/>`;
});

out += '<text x="1211" y="162" fill="#dcdcdc">7.540</text><path d="M1249 161l8-8m-5 0h5v5" fill="none" stroke="#dcdcdc"/>';
out += '<text x="195" y="499" fill="#dcdcdc">5.794</text><path d="M193 490l-8 8m0-5v5h5" fill="none" stroke="#dcdcdc"/>';
out += '<text x="1259" y="513" fill="#ff1e00" font-size="12" font-weight="bold">S</text><path d="M1260 503l3-3 3 3z" fill="#ff1e00"/>';
document.getElementById('kline').innerHTML = out;

// MACD
const my = v => 588 - v * 242;
let e12 = 6.33, e26 = 6.421, dea = -0.07;
const difPts = [], deaPts = [];
out = dotted(539);
bars.forEach((d, i) => {
    const p = 5.794 + (1144 - d.close) / 618;
    if (i > 0) {
        e12 += (p - e12) * 2 / 13;
        e26 += (p - e26) * 2 / 27;
        dea += (e12 - e26 - dea) * 2 / 10;
    }
    const dif = e12 - e26, h = Math.round(2 * (dif - dea) * 242), x = barX(i);
    out += h > 0 ? rect(x, 588 - h, 1, h + 1, '#e63c46') : rect(x, 588, 1, 1 - h, '#00c8c8');
    difPts.push(`${x + 0.5},${my(dif)}`);
    deaPts.push(`${x + 0.5},${my(dea)}`);
});
out += line(difPts, '#ffffff') + line(deaPts, '#ffff00');
document.getElementById('macd').innerHTML = out;

// 时间轴
out = '';
[[12, 15, '09'], [42, 45, '10'], [177, 180, '11'], [334, 337, '12'], [500, 502, '2021'], [649, 652, '02'], [784, 787, '03'], [957, 959, '04'], [1099, 1102, '05'], [1249, 0, '']].forEach(([t, x, s]) => {
    out += rect(t, 625, 1, 6, '#484848') + `<text x="${x}" y="641" fill="${s === '2021' ? '#fff' : '#a0a0a0'}">${s}</text>`;
});
document.getElementById('dates').innerHTML = out;
```
